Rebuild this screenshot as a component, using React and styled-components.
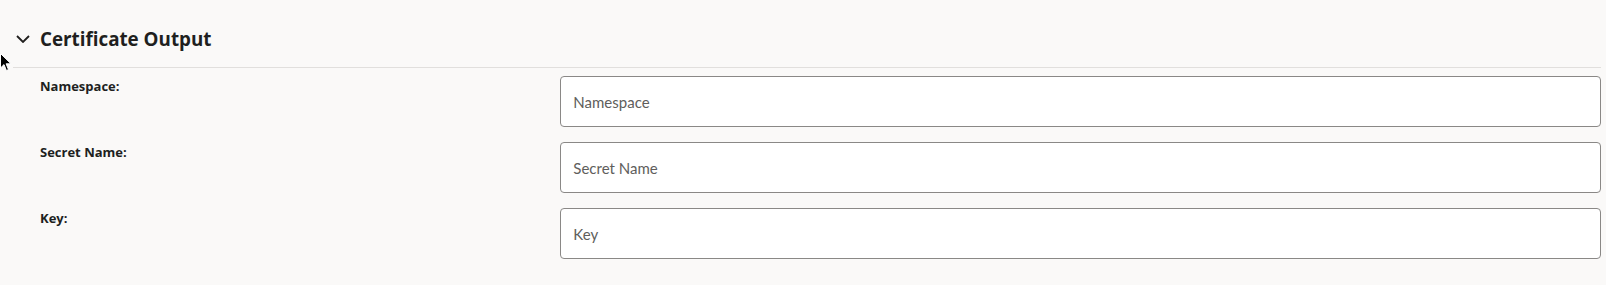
import React from "react";
import styled, { createGlobalStyle } from "styled-components";

const Global = createGlobalStyle`
  html, body { margin: 0; padding: 0; background: #faf9f8; overflow: hidden; }
  body { font-family: "Open Sans", "Noto Sans", sans-serif; color: #201f1e; }
  * { box-sizing: border-box; }
`;

const Page = styled.div`
  position: relative;
  width: 1606px;
  height: 285px;
  padding: 0 5px 0 13px;
`;

const Header = styled.div`
  display: flex;
  align-items: center;
  gap: 10px;
  padding: 26px 0 15px 3px;
  border-bottom: 1px solid #e1dfdd;
`;

const Title = styled.h2`
  margin: 0;
  font-size: 18.8px;
  line-height: 26px;
  font-weight: 700;
  color: #201f1e;
`;

const Rows = styled.div`
  display: grid;
  grid-template-columns: 1fr 2fr;
  row-gap: 15px;
  padding: 8px 0 0 27px;
`;

const Label = styled.label`
  font-size: 13px;
  font-weight: 700;
  color: #201f1e;
  padding-top: 1px;
`;

const Input = styled.input`
  height: 51px;
  width: 100%;
  border: 1px solid #8a8886;
  border-radius: 4px;
  background: #fff;
  padding: 0 12px;
  font-family: Lato, "Open Sans", sans-serif;
  font-size: 15px;
  color: #201f1e;
  outline: none;
  &::placeholder { color: #605e5c; }
`;

const Cursor = styled.svg`
  position: absolute;
  left: 0;
  top: 53px;
`;

const Chevron = () => (
  <svg width="14" height="8" viewBox="0 0 14 8">
    <path d="M1 1 L7 7 L13 1" fill="none" stroke="#201f1e" strokeWidth="1.8" />
  </svg>
);

const fields = ["Namespace", "Secret Name", "Key"];

export default function App() {
  return (
    <>
      <Global />
      <Page>
        <Header>
          <Chevron />
          <Title>Certificate Output</Title>
        </Header>
        <Rows>
          {fields.map((f) => (
            <React.Fragment key={f}>
              <Label>{f}:</Label>
              <Input placeholder={f} />
            </React.Fragment>
          ))}
        </Rows>
        <Cursor width="12" height="19" viewBox="0 0 12 19">
          <path d="M0.5 0.5 L0.5 15 L4 11.6 L6.4 17.5 L8.5 16.6 L6.1 10.8 L11 10.8 Z" fill="#000" stroke="#fff" strokeWidth="1" />
        </Cursor>
      </Page>
    </>
  );
}
